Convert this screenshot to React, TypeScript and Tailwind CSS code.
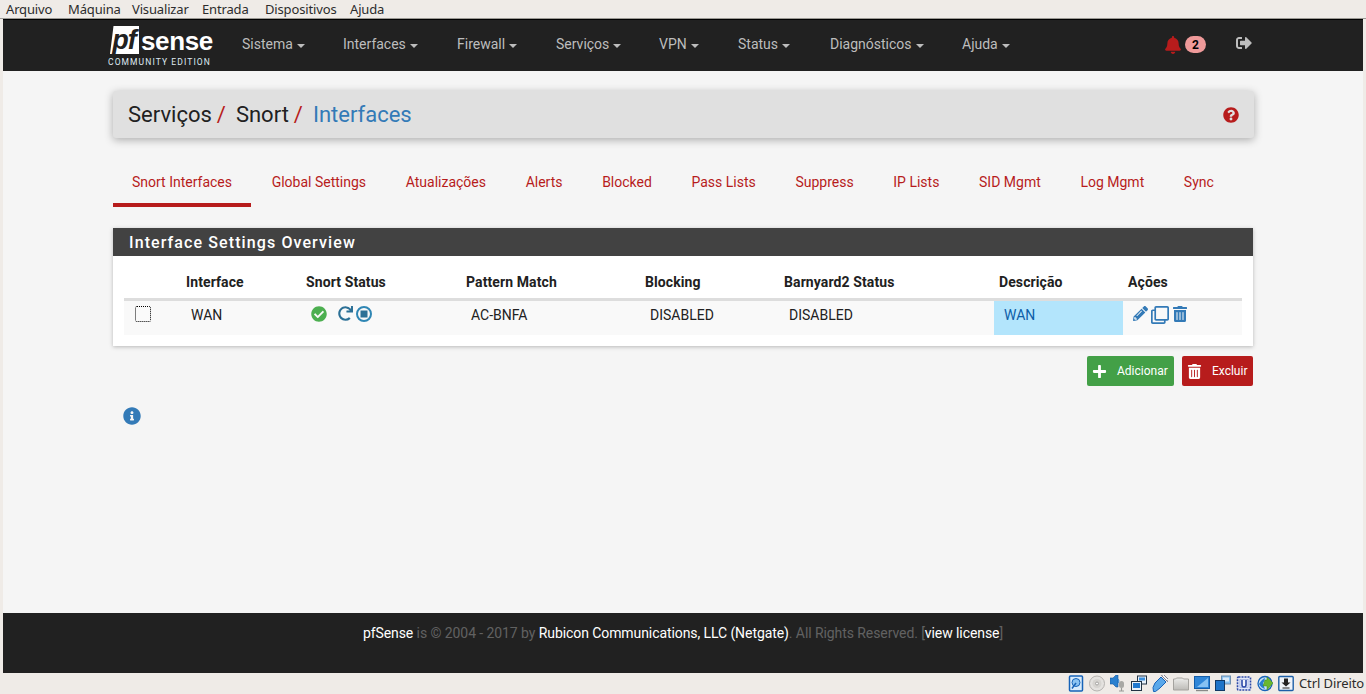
import {
  FaBell,
  FaCheckCircle,
  FaInfoCircle,
  FaPencilAlt,
  FaPlus,
  FaQuestionCircle,
  FaRedo,
  FaRegClone,
  FaSignOutAlt,
  FaTrashAlt,
} from "react-icons/fa";

const MENU = [
  { label: "Arquivo", width: "w-[62px]" },
  { label: "Máquina", width: "w-[64px]" },
  { label: "Visualizar", width: "w-[70px]" },
  { label: "Entrada", width: "w-[63px]" },
  { label: "Dispositivos", width: "w-[85px]" },
  { label: "Ajuda", width: "w-[50px]" },
];

const NAV = [
  { label: "Sistema", width: "w-[101px]" },
  { label: "Interfaces", width: "w-[114px]" },
  { label: "Firewall", width: "w-[99px]" },
  { label: "Serviços", width: "w-[103px]" },
  { label: "VPN", width: "w-[79px]" },
  { label: "Status", width: "w-[92px]" },
  { label: "Diagnósticos", width: "w-[132px]" },
  { label: "Ajuda", width: "w-[80px]" },
];

const TABS = ["Snort Interfaces", "Global Settings", "Atualizações", "Alerts", "Blocked", "Pass Lists", "Suppress", "IP Lists", "SID Mgmt", "Log Mgmt", "Sync"];

const COLS = ["w-[57px]", "w-[120px]", "w-[160px]", "w-[179px]", "w-[139px]", "w-[215px]", "w-[129px]", "w-[119px]"];
const HEADS = ["", "Interface", "Snort Status", "Pattern Match", "Blocking", "Barnyard2 Status", "Descrição", "Ações"];

// VirtualBox status bar icons
function StatusIcons() {
  return (
    <div className="flex items-center gap-[5px]">
      <svg width="16" height="17" viewBox="0 0 16 17">
        <rect x="1.5" y="1" width="13" height="15" rx="1" fill="#d8ebfb" stroke="#1763b8" strokeWidth="1.5" />
        <circle cx="8" cy="7.5" r="4" fill="#8cc4f2" stroke="#1763b8" />
        <path d="M4 13.5 8 8" stroke="#1763b8" strokeWidth="1.5" />
      </svg>
      <svg width="16" height="17" viewBox="0 0 16 17">
        <circle cx="8" cy="8.5" r="7.5" fill="#e4e2df" stroke="#b5b3b0" />
        <circle cx="8" cy="8.5" r="4.5" fill="#d6d4d0" />
        <circle cx="8" cy="8.5" r="1.5" fill="#f8f8f8" stroke="#a5a3a0" />
      </svg>
      <svg width="16" height="17" viewBox="0 0 16 17">
        <path d="M0 3h3l3-3h2v12H6L3 9H0z" fill="#2a80cf" stroke="#15589e" strokeWidth="0.6" />
        <path d="M8 4q2 2 0 4" fill="none" stroke="#2a80cf" />
        <rect x="9" y="6" width="5" height="7" rx="2.5" fill="#a8a8a4" />
        <path d="M11.5 13v3M9 16h5" stroke="#9a9a96" strokeWidth="1.2" />
      </svg>
      <svg width="16" height="17" viewBox="0 0 16 17">
        <rect x="6.5" y="1" width="9" height="8" fill="#e8f1fa" stroke="#223344" />
        <rect x="8" y="2.5" width="6" height="3" fill="#3b8fdd" />
        <rect x="0.5" y="6.5" width="10" height="9" fill="#e8f1fa" stroke="#223344" />
        <rect x="2" y="8" width="7" height="5" fill="#1f78cf" />
      </svg>
      <svg width="16" height="17" viewBox="0 0 16 17">
        <path d="M1 12.5 3 8l6-6 5 5-6 6-4.5 3.5H1.5z" fill="#5aa8ea" stroke="#1763b8" />
        <path d="m9.5 0.5 6 6 1-2-5-5z" fill="#f4f4f4" stroke="#556" strokeWidth="0.7" />
      </svg>
      <svg width="16" height="17" viewBox="0 0 16 17">
        <defs>
          <linearGradient id="folder" x1="0" y1="0" x2="0" y2="1">
            <stop offset="0" stopColor="#ececea" />
            <stop offset="1" stopColor="#bdbbb7" />
          </linearGradient>
        </defs>
        <path d="M0.5 4h2l1-1h6l1 1h5v11h-15z" fill="url(#folder)" stroke="#a5a39f" />
      </svg>
      <svg width="16" height="17" viewBox="0 0 16 17">
        <rect x="0.5" y="1.5" width="15" height="12" fill="#2f86d8" stroke="#135da8" />
        <path d="M14 3v9H3z" fill="#86c2f3" />
        <path d="M2 15.5h12" stroke="#8a8a88" strokeWidth="1.4" />
      </svg>
      <svg width="16" height="17" viewBox="0 0 16 17">
        <rect x="6.5" y="1" width="9" height="8" fill="#86c2f3" stroke="#6f8fb0" />
        <rect x="8" y="2.5" width="6" height="4" fill="#dcecfa" />
        <rect x="0.5" y="5.5" width="9" height="10" fill="#1d74c9" stroke="#123a66" />
      </svg>
      <svg width="16" height="17" viewBox="0 0 16 17">
        <rect x="1.5" y="2" width="13" height="13" rx="1" fill="#e2e8fa" stroke="#2d4aa8" strokeWidth="1.6" strokeDasharray="2 1" />
        <rect x="4" y="4.5" width="8" height="8" fill="#f4f6fd" stroke="#7f93d0" strokeWidth="0.6" />
        <path d="M6 5v5a2 2 0 0 0 4 0V5" fill="none" stroke="#2d4aa8" strokeWidth="1.6" />
      </svg>
      <svg width="16" height="17" viewBox="0 0 16 17">
        <circle cx="8" cy="8.5" r="7" fill="#c8e2f8" stroke="#1763b8" strokeWidth="1.3" />
        <path d="M2 9q3-5 6-6 0 3-2 5 1 4 2 6-4-1-6-5z" fill="#2a80cf" />
        <path d="M8 5h2V2l6 6-6 7v-4H6z" fill="#6ab82e" stroke="#3f8a18" strokeWidth="0.5" />
      </svg>
      <svg width="16" height="17" viewBox="0 0 16 17">
        <rect x="0.8" y="1.5" width="14.4" height="14" rx="1" fill="#eef3f9" stroke="#1c5fa8" strokeWidth="1.4" />
        <path d="M6 3.5h4v4h2.5L8 11.5l-4.5-4H6z" fill="#222222" />
        <path d="M4.5 13h7" stroke="#222222" />
      </svg>
    </div>
  );
}

export default function App() {
  return (
    <div className="flex h-[694px] flex-col overflow-hidden bg-[#efebe7] font-['Roboto',sans-serif] text-[14px] text-[#212121]">
      <div className="flex h-[18px] items-center pl-[6px] font-['Noto_Sans',sans-serif] text-[13px] leading-[18px] tracking-[-0.15px] text-[#2c2c2c]">
        {MENU.map((m) => (
          <span key={m.label} className={m.width}>{m.label}</span>
        ))}
      </div>
      <div className="h-px bg-[#9b9994]" />

      <div className="mx-[3px] flex flex-1 flex-col">
        <nav className="flex h-[52px] border-t border-t-black bg-[#212121] pl-[105px]">
          <div className="mt-[6px] w-[134px]">
            <div className="ml-[2px] flex h-[28px] items-center">
              <span className="flex h-[28px] w-[29px] items-center justify-center bg-white pr-[1px] font-['Liberation_Sans',sans-serif] text-[27px] leading-none font-bold tracking-[-1px] text-[#212121] italic [clip-path:polygon(12%_0,100%_0,100%_100%,0_100%)]">pf</span>
              <span className="mt-[1px] ml-[2px] font-['Liberation_Sans',sans-serif] text-[26px] leading-none font-bold tracking-[-0.35px] text-white">sense</span>
            </div>
            <div className="mt-[3px] text-[8.5px] leading-[10px] font-normal tracking-[1.1px] text-[#dfe9f2]">COMMUNITY EDITION</div>
          </div>
          {NAV.map((n) => (
            <div key={n.label} className={`${n.width} flex h-[49px] items-center text-[#bdbdbd]`}>
              {n.label}
              <span className="mt-[2px] ml-[4px] h-0 w-0 border-x-4 border-t-4 border-x-transparent border-t-[#bdbdbd]" />
            </div>
          ))}
          <div className="ml-[122px] flex h-[49px] items-center">
            <FaBell className="text-[#b71c1c]" size={18} />
            <span className="ml-[3px] flex h-[17px] w-[21px] items-center justify-center rounded-full bg-[#ef9a9a] text-[12px] font-bold text-black">2</span>
            <FaSignOutAlt className="mt-[-4px] ml-[30px] text-[#bdbdbd]" size={16} />
          </div>
        </nav>

        <main className="w-full flex-1 bg-[#f5f5f5] pt-[20px] pl-[110px]">
          <div className="w-[1141px]">
            <div className="flex h-[47px] items-center justify-between rounded-[3px] bg-[#e0e0e0] px-[15px] text-[22px] shadow-[0_2px_8px_rgba(0,0,0,0.3)]">
              <div>
                <span>Serviços</span>
                <span className="mr-[10px] ml-[5px] text-[#b71c1c]">/</span>
                <span>Snort</span>
                <span className="mr-[10px] ml-[5px] text-[#b71c1c]">/</span>
                <span className="text-[#337ab7]">Interfaces</span>
              </div>
              <FaQuestionCircle className="text-[#b71c1c]" size={16} />
            </div>

            <div className="mt-[19px] flex h-[50px] gap-[1.65px]">
              {TABS.map((t, i) => (
                <div
                  key={t}
                  className={`flex items-center border-b-4 px-[19px] pt-[5px] text-[#b71c1c] ${i === 0 ? "border-b-[#b71c1c]" : "border-b-transparent"}`}
                >
                  {t}
                </div>
              ))}
            </div>

            <div className="mt-[21px] w-[1140px] bg-white shadow-[0_1px_4px_rgba(0,0,0,0.25)]">
              <div className="flex h-[28px] items-center bg-[#424242] pt-[1px] pl-[16px] text-[16px] font-medium tracking-[1.1px] text-white">
                Interface Settings Overview
              </div>
              <div className="px-[11px] pt-[12px] pb-[11px]">
                <table className="w-[1118px] table-fixed border-collapse">
                  <colgroup>
                    {COLS.map((c) => (
                      <col key={c} className={c} />
                    ))}
                  </colgroup>
                  <thead>
                    <tr className="h-[31px] border-b-[3px] border-b-[#dddddd]">
                      {HEADS.map((h) => (
                        <th key={h} className="pl-[5px] text-left font-bold tracking-[0.1px]">{h}</th>
                      ))}
                    </tr>
                  </thead>
                  <tbody>
                    <tr className="h-[36px] bg-[#f9f9f9]">
                      <td className="pl-[11px]">
                        <div className="mt-[-8px] h-[16px] w-[16px] rounded-[2px] border border-dotted border-black bg-[#fafafa]" />
                      </td>
                      <td className="pb-[5px] pl-[10px]">WAN</td>
                      <td className="pl-[10px]">
                        <div className="mt-[-8px] flex items-center">
                          <FaCheckCircle className="text-[#4caf50]" size={16} />
                          <FaRedo className="ml-[11px] text-[#2c7096]" size={15} />
                          <svg className="ml-[3px]" width="16" height="16" viewBox="0 0 16 16">
                            <circle cx="8" cy="8" r="7" fill="none" stroke="#2f86b4" strokeWidth="2" />
                            <rect x="4.5" y="4.5" width="7" height="7" fill="#2c7096" />
                          </svg>
                        </div>
                      </td>
                      <td className="pb-[5px] pl-[10px]">AC-BNFA</td>
                      <td className="pb-[5px] pl-[10px]">DISABLED</td>
                      <td className="pb-[5px] pl-[10px]">DISABLED</td>
                      <td className="bg-[#b3e5fc] pb-[5px] pl-[10px] text-[#0d5ea8]">WAN</td>
                      <td className="pl-[10px]">
                        <div className="mt-[-8px] flex items-center text-[#337ab7]">
                          <FaPencilAlt size={15} />
                          <FaRegClone className="mt-[2px] ml-[3px]" size={18} />
                          <FaTrashAlt className="ml-[3px]" size={16} />
                        </div>
                      </td>
                    </tr>
                  </tbody>
                </table>
              </div>
            </div>

            <div className="mt-[10px] flex w-[1140px] justify-end gap-[8px] text-[12px] text-white">
              <div className="flex h-[30px] w-[87px] items-center rounded-[2px] bg-[#43a047] pl-[5px]">
                <FaPlus size={15} />
                <span className="ml-[10px]">Adicionar</span>
              </div>
              <div className="flex h-[30px] w-[71px] items-center rounded-[2px] bg-[#b71c1c] pl-[5px]">
                <FaTrashAlt size={15} />
                <span className="ml-[10px]">Excluir</span>
              </div>
            </div>

            <FaInfoCircle className="mt-[21px] ml-[10px] text-[#337ab7]" size={18} />
          </div>
        </main>

        <footer className="h-[60px] bg-[#212121] pt-[10px] text-center tracking-[-0.08px] text-[#616161]">
          <span className="text-white">pfSense</span> is © 2004 - 2017 by{" "}
          <span className="text-white">Rubicon Communications, LLC (Netgate)</span>. All Rights Reserved. [
          <span className="text-white">view license</span>]
        </footer>
      </div>

      <div className="flex h-[21px] items-center justify-end pr-[2px] font-['Noto_Sans',sans-serif] text-[13px] tracking-[-0.1px] text-[#2c2c2c]">
        <StatusIcons />
        <span className="ml-[5px]">Ctrl Direito</span>
      </div>
    </div>
  );
}
